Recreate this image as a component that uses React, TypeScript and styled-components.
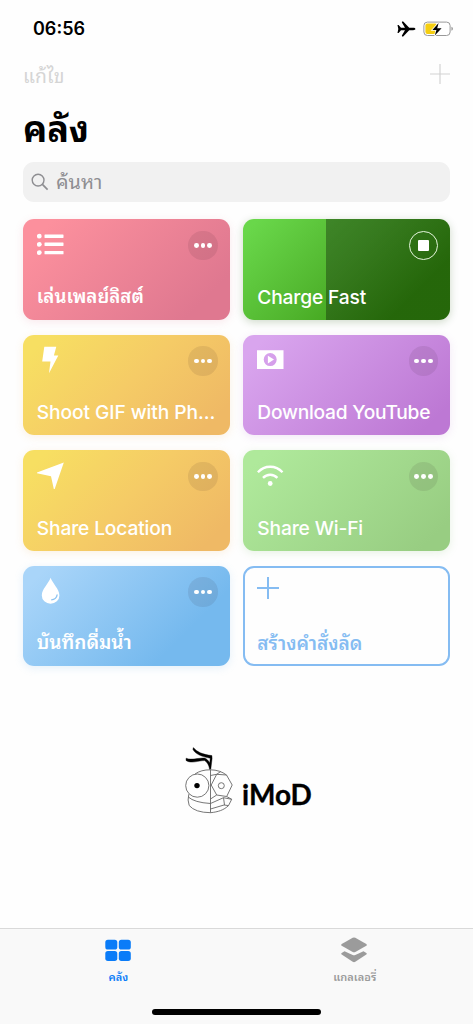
import React from "react";
import styled, { createGlobalStyle } from "styled-components";

const Global = createGlobalStyle`
  * { box-sizing: border-box; }
  body { margin: 0; background: #fefefe; }
  svg { display: block; }
`;

const Screen = styled.div`
  width: 473px;
  height: 1024px;
  display: flex;
  flex-direction: column;
  background: #fefefe;
  color: #000;
  overflow: hidden;
  font-family: Inter, "Noto Sans Thai Looped", "Noto Looped Thai", Sarabun, Loma, Garuda, Umpush, Waree, "Noto Sans Thai", sans-serif;
`;

const StatusBar = styled.header`
  height: 56px;
  padding: 1px 19px 0 33px;
  display: flex;
  align-items: center;
  justify-content: space-between;
`;

const Clock = styled.span`
  font-size: 18px;
  font-weight: 600;
`;

const StatusIcons = styled.div`
  display: flex;
  align-items: center;
  gap: 7px;
`;

const NavBar = styled.nav`
  height: 44px;
  padding: 0 23px;
  display: flex;
  align-items: flex-start;
  justify-content: space-between;
`;

const Fit = styled.span<{ $size: number; $weight?: number; $spacing?: number; $line?: number }>`
  font-size: ${(p) => p.$size}px;
  font-weight: ${(p) => p.$weight ?? 400};
  letter-spacing: ${(p) => p.$spacing ?? 0}px;
  line-height: ${(p) => p.$line ?? 24}px;
  white-space: nowrap;
`;

const EditButton = styled(Fit)`
  color: #d5d5d5;
  margin-top: 8px;
`;

const AddButton = styled.div`
  margin-top: 8px;
  color: #d2d2d2;
`;

const Title = styled.h1`
  margin: 0;
  height: 61.5px;
  padding-left: 23px;
  font-size: 36px;
  line-height: 58px;
  font-weight: 700;
`;

const SearchField = styled.div`
  height: 40.5px;
  margin: 0 23px;
  padding: 0 8px;
  display: flex;
  align-items: center;
  gap: 7px;
  border-radius: 11px;
  background: #f1f1f1;
  color: #8e8e92;
`;

const Grid = styled.main`
  display: grid;
  grid-template-columns: 207px 207px;
  grid-auto-rows: 100.5px;
  gap: 15px 13.5px;
  padding: 17.3px 0 0 22.8px;
`;

const Card = styled.article<{ $bg: string; $glow: string }>`
  display: flex;
  flex-direction: column;
  justify-content: space-between;
  padding: 11.5px 12px 11px 14px;
  border-radius: 11px;
  background: ${(p) => p.$bg};
  box-shadow: 0 2px 9px ${(p) => p.$glow};
  color: #fff;
`;

const OutlineCard = styled(Card)`
  border: 2px solid #85bcf2;
  padding: 9.5px 10px 8.5px 12px;
  color: #85bcf2;
`;

const CardTop = styled.div`
  height: 30px;
  display: flex;
  justify-content: space-between;
`;

const MoreButton = styled.div`
  width: 29.5px;
  height: 29.5px;
  display: flex;
  align-items: center;
  justify-content: center;
  gap: 2px;
  border-radius: 50%;
  background: rgba(40, 20, 30, 0.09);
`;

const Dot = styled.i`
  width: 4.8px;
  height: 4.8px;
  border-radius: 50%;
  background: #fff;
`;

const StopButton = styled(MoreButton)`
  background: none;
  border: 1.3px solid #e4f5dc;
`;

const StopSquare = styled.i`
  width: 11.5px;
  height: 11.5px;
  border-radius: 1px;
  background: #fff;
`;

const Brand = styled.section`
  display: flex;
  align-items: flex-start;
  height: 70px;
  margin: 80.5px 0 0 184px;
`;

const BrandName = styled.span`
  margin: 29px 0 0 8px;
  font-family: Lato, sans-serif;
  font-size: 28px;
  line-height: 36px;
  font-weight: 700;
  -webkit-text-stroke: 0.3px #000;
`;

const TabBar = styled.footer`
  height: 96px;
  margin-top: auto;
  display: flex;
  flex-direction: column;
  justify-content: space-between;
  align-items: center;
  padding-bottom: 9px;
  border-top: 1px solid #d9d9d9;
  background: #f9f9f9;
`;

const Tabs = styled.div`
  width: 100%;
  display: flex;
`;

const Tab = styled.div<{ $color: string }>`
  flex: 1;
  height: 62px;
  display: flex;
  flex-direction: column;
  align-items: center;
  padding-top: 8px;
  gap: 5px;
  color: ${(p) => p.$color};
`;

const HomeIndicator = styled.div`
  width: 169px;
  height: 6px;
  border-radius: 3px;
  background: #000;
`;

const ListIcon = () => (
  <svg width="27" height="28" viewBox="0 0 27 28" fill="#fff">
    {[5.2, 13.3, 21.6].map((y) => (
      <g key={y}>
        <circle cx="2.3" cy={y} r="2.4" />
        <rect x="7.5" y={y - 1.7} width="19" height="3.4" rx="0.4" />
      </g>
    ))}
  </svg>
);

const BoltIcon = () => (
  <svg width="27" height="28" viewBox="0 0 27 28" fill="#fff">
    <path d="M7.3.7h12l-2.4 8.7h4.4L12 27.2l1.5-11.7H5.2Z" />
  </svg>
);

const VideoIcon = () => (
  <svg width="27" height="28" viewBox="0 0 27 28" fill="#fff">
    <path fillRule="evenodd" d="M0 4.2h26.5v18.7H0ZM13.2 7.1a6.5 6.5 0 1 0 0 13a6.5 6.5 0 0 0 0-13Z" />
    <path d="M10.9 9.7v7.8l6.1-3.9Z" />
  </svg>
);

const ArrowIcon = () => (
  <svg width="27" height="28" viewBox="0 0 27 28" fill="#fff">
    <path d="M26.8.4 17.7 27h-.9L14 14.2 0 11.2v-.8Z" />
  </svg>
);

const WifiIcon = () => (
  <svg width="27" height="28" viewBox="0 0 27 28" fill="none" stroke="#fff" strokeWidth="2.4">
    <path d="M.9 10.3Q6 4.8 13.2 4.8T25.5 10.3M6 15.9Q9 12.7 13.2 12.7T20.4 15.9" />
    <circle cx="13.2" cy="21.5" r="2.4" fill="#fff" stroke="none" />
  </svg>
);

const DropIcon = () => (
  <svg width="27" height="28" viewBox="0 0 27 28">
    <path d="M13.6.7C11.5 6.5 4.8 12 4.8 18.4a8.8 8.4 0 0 0 17.6 0C22.4 12 15.7 6.5 13.6.7Z" fill="#fff" />
    <path d="M20.2 17.5q-.7 5-6 5.4" fill="none" stroke="#8fc5f2" strokeWidth="1.4" />
  </svg>
);

const PlusIcon = ({ size, width }: { size: number; width: number }) => (
  <svg width={size} height={size} viewBox={`0 0 ${size} ${size}`} stroke="currentColor" strokeWidth={width}>
    <path d={`M${size / 2} 0V${size}M0 ${size / 2}H${size}`} />
  </svg>
);

const Plane = () => (
  <svg width="19" height="16" viewBox="0 0 19 16">
    <path d="M.5 3.9h1.1L4 6.7l4 .1L4.9 1.4 5 .4h1.2l6 6.4h3.9c1.4 0 2.3.5 2.3 1.2s-.9 1.2-2.3 1.2h-3.9l-6 6.4H5l-.1-1L8 9.2l-4 .1-2.4 2.8H.5L1.3 8Z" />
  </svg>
);

const Battery = () => (
  <svg width="31" height="16" viewBox="0 0 31 16">
    <rect x="0.9" y="1.1" width="26.2" height="13.4" rx="3.5" fill="#fff" stroke="#999" strokeWidth="1" />
    <path d="M28.5 5.8v4c1.8-.6 1.8-3.4 0-4Z" fill="#888" />
    <rect x="2.4" y="2.6" width="11.8" height="10.4" rx="2" fill="#f5ce10" />
    <path d="m15.6 2-6.2 6.9h4l-1.6 5.7 6.8-7.4h-4.4Z" fill="#000" stroke="#fff" strokeWidth="1.6" paintOrder="stroke" />
  </svg>
);

const SearchIcon = () => (
  <svg width="18" height="18" viewBox="0 0 18 18" fill="none" stroke="#8e8e92" strokeWidth="1.4">
    <circle cx="7.1" cy="7.1" r="5.9" />
    <path d="m11.4 11.4 5.2 5.2" strokeWidth="1.7" />
  </svg>
);

const BrandMark = () => (
  <svg width="50" height="68" viewBox="0 0 50 68" fill="none" stroke="#666" strokeWidth="0.9">
    <path d="M9.4.6C13 5 18 7.3 27.9 8.6l.2 2.8-1.3 10.8-1.2.2C25 18.5 23.500 15.500 20.600 13.600 15 13.400 7 17.200 2 13.400l.1-2.200c5.500 2.400 13-.8 19.200 0 1.500.8 3 2.300 4.500 4.500l.4-4.500C18 9.800 11.200 7.200 8.900 2.300Z" fill="#000" stroke="#000" strokeWidth="0.4" />
    <path d="M11 27q6-4.3 15.5-4.2V65.7" />
    <circle cx="13.3" cy="38.6" r="11.6" fill="#fff" />
    <circle cx="13" cy="38.6" r="2.7" fill="#000" stroke="none" />
    <path d="M4.8 47.2q-1.6 6 .4 11.3Q11 65.5 26.5 65.7C34 65 40 63 44.5 58.6l3.2-6.3-5-2.8" />
    <path d="M26.5 22.8q9.5.2 16 5.2l5.7 10-5.5 11.5-10-1.5-5.500-10 5.500-10.700L42.500 28M26.500 28.500l6.200-1.200 4-2.800" />
    <circle cx="37.3" cy="38.7" r="3" />
    <path d="M4.3 50q6 5.5 22.2 6.5l13-5.8 8.2 1.6M26.5 62l13.5-4 4.500.6M32.700 48l-6.200 4M39.500 50.700l1 7.300" />
  </svg>
);

const LibraryIcon = () => (
  <svg width="26" height="26" viewBox="0 0 26 26" fill="currentColor">
    <rect x="0.3" y="2.8" width="12" height="9.8" rx="2.6" />
    <rect x="13.8" y="2.8" width="12" height="9.8" rx="2.6" />
    <rect x="0.3" y="14.1" width="12" height="9.8" rx="2.6" />
    <rect x="13.8" y="14.1" width="12" height="9.8" rx="2.6" />
  </svg>
);

const GalleryIcon = () => (
  <svg width="28" height="26" viewBox="0 0 28 26" fill="currentColor">
    <path d="M11.7.8q1.300-.6 2.600 0l11 6.300q1 .8 0 1.600l-11 6.300q-1.300.7-2.600 0l-11-6.300q-1-.8 0-1.600Z" />
    <path d="m3.500 14.200 8.200 3.700q1.300.6 2.600 0l8.200-3.700 2.800 1.900q.9.700 0 1.500l-11 7.200q-1.300.7-2.600 0l-11-7.200q-.9-.8 0-1.500Z" />
  </svg>
);

const More = () => (
  <MoreButton>
    <Dot />
    <Dot />
    <Dot />
  </MoreButton>
);

const yellow = "linear-gradient(135deg, #f7df62 8%, #f5cb66 50%, #efb965 90%)";

const shortcuts = [
  { label: "เล่นเพลย์ลิสต์", icon: <ListIcon />, bg: "linear-gradient(135deg, #fc909d 10%, #df7890 85%)", glow: "rgba(225,120,145,.16)", size: 18.7, weight: 600 },
  { label: "Charge Fast", icon: null, bg: "linear-gradient(90deg, transparent 40%, rgba(0,0,0,.32) 40%), linear-gradient(135deg, #69d74a 5%, #50b42d 48%, #37980f 80%)", glow: "rgba(30,80,10,.22)", stop: true },
  { label: "Shoot GIF with Ph...", icon: <BoltIcon />, bg: yellow, glow: "rgba(235,175,90,.16)", spacing: -0.08 },
  { label: "Download YouTube", icon: <VideoIcon />, bg: "linear-gradient(135deg, #d9a5ee 8%, #bd78d4 90%)", glow: "rgba(180,110,205,.16)", spacing: -0.23 },
  { label: "Share Location", icon: <ArrowIcon />, bg: yellow, glow: "rgba(235,175,90,.16)" },
  { label: "Share Wi-Fi", icon: <WifiIcon />, bg: "linear-gradient(135deg, #afe99b 8%, #98cd82 90%)", glow: "rgba(130,190,110,.18)" },
  { label: "บันทึกดื่มน้ำ", icon: <DropIcon />, bg: "linear-gradient(135deg, #a9d5f9 8%, #75b9ee 75%)", glow: "rgba(110,175,235,.18)", size: 19, weight: 600 },
];

export default function App() {
  return (
    <Screen>
      <Global />
      <StatusBar>
        <Clock>06:56</Clock>
        <StatusIcons>
          <Plane />
          <Battery />
        </StatusIcons>
      </StatusBar>
      <NavBar>
        <EditButton $size={19.3}>แก้ไข</EditButton>
        <AddButton>
          <PlusIcon size={20} width={1.2} />
        </AddButton>
      </NavBar>
      <Title>คลัง</Title>
      <SearchField>
        <SearchIcon />
        <Fit $size={19.8}>ค้นหา</Fit>
      </SearchField>
      <Grid>
        {shortcuts.map((s) => (
          <Card key={s.label} $bg={s.bg} $glow={s.glow}>
            <CardTop>
              {s.icon ?? <span />}
              {s.stop ? (
                <StopButton>
                  <StopSquare />
                </StopButton>
              ) : (
                <More />
              )}
            </CardTop>
            <Fit $size={s.size ?? 19.2} $weight={s.weight ?? 550} $spacing={s.spacing ?? (s.size ? 0 : -0.15)}>
              {s.label}
            </Fit>
          </Card>
        ))}
        <OutlineCard $bg="#fefefe" $glow="transparent">
          <CardTop>
            <PlusIcon size={22} width={2} />
          </CardTop>
          <Fit $size={19} $weight={600}>สร้างคำสั่งลัด</Fit>
        </OutlineCard>
      </Grid>
      <Brand>
        <BrandMark />
        <BrandName>iMoD</BrandName>
      </Brand>
      <TabBar>
        <Tabs>
          <Tab $color="#0a7cf8">
            <LibraryIcon />
            <Fit $size={11} $weight={600} $line={18}>คลัง</Fit>
          </Tab>
          <Tab $color="#9b9b9b">
            <GalleryIcon />
            <Fit $size={11} $weight={600} $line={18}>แกลเลอรี่</Fit>
          </Tab>
        </Tabs>
        <HomeIndicator />
      </TabBar>
    </Screen>
  );
}
